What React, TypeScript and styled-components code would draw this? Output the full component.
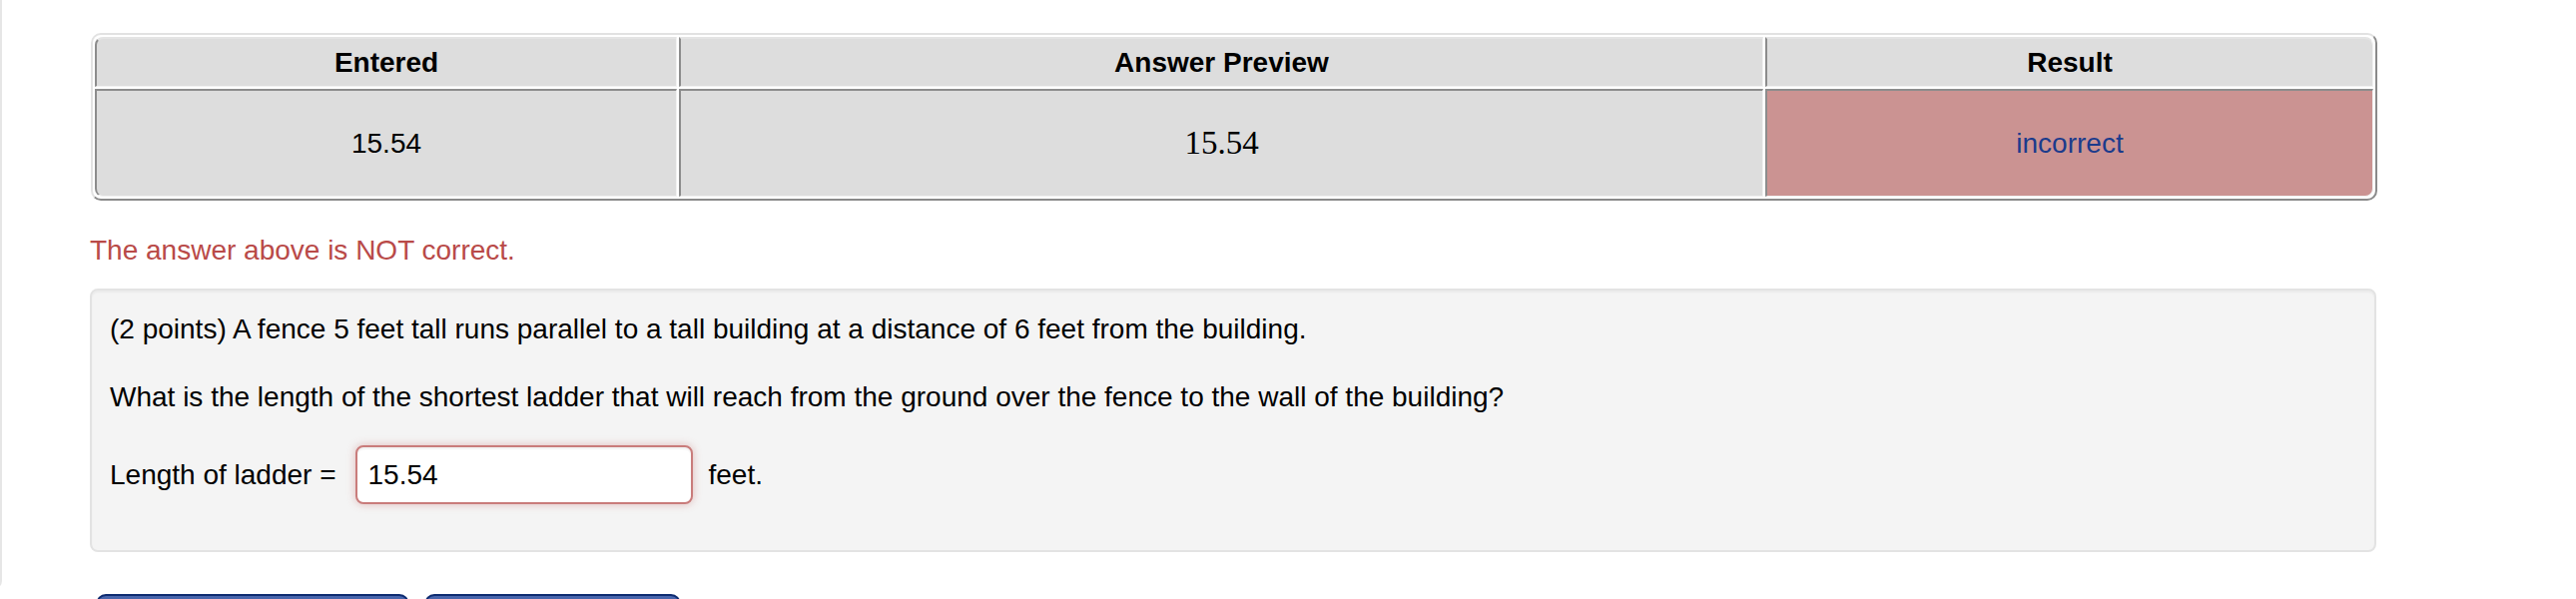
import React from "react";
import styled, { createGlobalStyle } from "styled-components";

const GlobalStyle = createGlobalStyle`
  html, body {
    margin: 0;
    padding: 0;
    background: #ffffff;
  }
  body {
    font-family: "Liberation Sans", Helvetica, Arial, sans-serif;
    font-size: 28px;
    color: #000;
  }
`;

const Page = styled.div`
  display: flex;
  align-items: flex-start;
`;

const SideRail = styled.div`
  flex: none;
  width: 8px;
  height: 588px;
  margin-left: -8px;
  border-right: 2px solid #e6e6e6;
  border-bottom: 2px solid #e6e6e6;
  border-bottom-right-radius: 8px;
`;

const Main = styled.main`
  flex: none;
  width: 2290px;
  padding: 33px 0 0 88px;
`;

const ResultsTable = styled.table`
  width: 2289px;
  margin-left: 1px;
  table-layout: fixed;
  border-collapse: separate;
  border-spacing: 2px;
  border-style: solid;
  border-width: 2px;
  border-color: #e2e2e2 #8a8a8a #8a8a8a #e2e2e2;
  border-radius: 10px;
`;

const HeadCell = styled.th<{ $corner?: "left" | "right" }>`
  background: #dddddd;
  font-weight: bold;
  font-size: 28px;
  line-height: 33px;
  text-align: center;
  vertical-align: middle;
  padding: 7px 10px;
  border-style: solid;
  border-width: 2px 1px 1px 2px;
  border-color: #e4e4e4 #f2f2f2 #f2f2f2 #8c8c8c;
  border-top-left-radius: ${(p) => (p.$corner === "left" ? "8px" : "0")};
  border-top-right-radius: ${(p) => (p.$corner === "right" ? "8px" : "0")};
`;

const BodyCell = styled.td<{
  $corner?: "left" | "right";
  $tone?: "plain" | "wrong";
  $serif?: boolean;
}>`
  background: ${(p) => (p.$tone === "wrong" ? "#cb9392" : "#dddddd")};
  color: ${(p) => (p.$tone === "wrong" ? "#1b3b8c" : "#000")};
  font-family: ${(p) =>
    p.$serif
      ? '"Liberation Serif", "Times New Roman", serif'
      : '"Liberation Sans", Helvetica, Arial, sans-serif'};
  font-size: ${(p) => (p.$serif ? "33px" : "28px")};
  line-height: 33px;
  text-align: center;
  vertical-align: middle;
  padding: 36px 10px;
  border-style: solid;
  border-width: 2px 1px 1px 2px;
  border-color: #8c8c8c #f2f2f2 #f2f2f2 #8c8c8c;
  border-bottom-left-radius: ${(p) => (p.$corner === "left" ? "8px" : "0")};
  border-bottom-right-radius: ${(p) => (p.$corner === "right" ? "8px" : "0")};
`;

const Message = styled.div`
  margin-top: 30px;
  color: #b94a48;
  font-size: 28px;
  line-height: 40px;
`;

const Well = styled.section`
  margin-top: 18px;
  box-sizing: border-box;
  width: 2290px;
  padding: 19px 18px 18px 18px;
  background: #f4f4f4;
  border: 2px solid #e3e3e3;
  border-radius: 8px;
  box-shadow: inset 0 2px 2px rgba(0, 0, 0, 0.04);
`;

const Para = styled.p`
  margin: 0 0 28px 0;
  font-size: 28px;
  line-height: 40px;
`;

const AnswerRow = styled.div`
  display: flex;
  align-items: center;
  margin: 26px 0 28px 0;
  font-size: 28px;
  line-height: 40px;
`;

const AnswerInput = styled.input`
  box-sizing: border-box;
  width: 338px;
  height: 59px;
  margin: 0 16px 0 19px;
  padding: 0 11px;
  font-family: "Liberation Sans", Helvetica, Arial, sans-serif;
  font-size: 28px;
  color: #000;
  background: #ffffff;
  border: 2px solid #c97c7b;
  border-radius: 8px;
  box-shadow: 0 0 9px rgba(185, 74, 72, 0.35),
    inset 0 2px 2px rgba(0, 0, 0, 0.06);
  outline: none;
`;

const ButtonRow = styled.div`
  display: flex;
  gap: 15px;
  margin-top: 42px;
  padding-left: 6px;
`;

const ActionButton = styled.button`
  height: 66px;
  padding: 0 26px;
  font-family: "Liberation Sans", Helvetica, Arial, sans-serif;
  font-size: 28px;
  line-height: 32px;
  color: #ffffff;
  background: linear-gradient(#20449a, #123583);
  border: 2px solid #0e2b70;
  border-radius: 10px;
  box-shadow: inset 0 3px 0 rgba(255, 255, 255, 0.18);
  white-space: nowrap;
`;

export default function App() {
  return (
    <>
      <GlobalStyle />
      <Page>
        <SideRail />
        <Main>
          <ResultsTable>
            <colgroup>
              <col style={{ width: "583px" }} />
              <col style={{ width: "1086px" }} />
              <col style={{ width: "609px" }} />
            </colgroup>
            <thead>
              <tr>
                <HeadCell $corner="left">Entered</HeadCell>
                <HeadCell>Answer Preview</HeadCell>
                <HeadCell $corner="right">Result</HeadCell>
              </tr>
            </thead>
            <tbody>
              <tr>
                <BodyCell $corner="left">15.54</BodyCell>
                <BodyCell $serif>15.54</BodyCell>
                <BodyCell $corner="right" $tone="wrong">
                  incorrect
                </BodyCell>
              </tr>
            </tbody>
          </ResultsTable>

          <Message>The answer above is NOT correct.</Message>

          <Well>
            <Para>
              (2 points) A fence 5 feet tall runs parallel to a tall building at
              a distance of 6 feet from the building.
            </Para>
            <Para>
              What is the length of the shortest ladder that will reach from the
              ground over the fence to the wall of the building?
            </Para>
            <AnswerRow>
              <span>Length of ladder =</span>
              <AnswerInput type="text" defaultValue="15.54" />
              <span>feet.</span>
            </AnswerRow>
          </Well>

          <ButtonRow>
            <ActionButton type="button">Preview My Answers</ActionButton>
            <ActionButton type="button">Submit Answers</ActionButton>
          </ButtonRow>
        </Main>
      </Page>
    </>
  );
}
